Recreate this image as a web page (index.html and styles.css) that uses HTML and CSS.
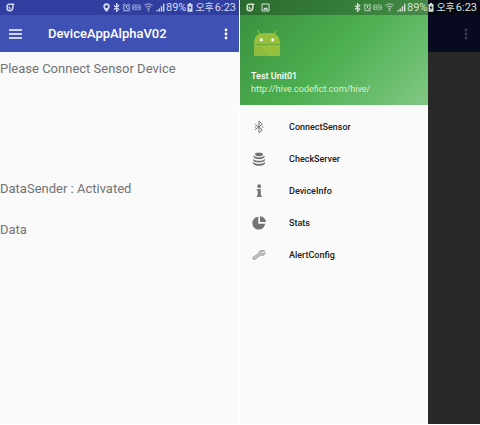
FILE: index.html
```html
<!DOCTYPE html>
<html lang="ko">
<head>
<meta charset="utf-8">
<title>DeviceAppAlphaV02</title>
<link rel="stylesheet" href="styles.css">
</head>
<body>
<svg class="sprite" aria-hidden="true">
  <symbol id="carrier" viewBox="0 0 9 9"><path d="M8.300 1.200H3.400Q1 1.200 1 4.400T3.700 7.800Q6.800 7.800 6.800 4.500V1.500M3.200 3.700Q3.200 5.600 4.600 5.400" fill="none" stroke="currentColor" stroke-width="1.500"/></symbol>
  <symbol id="pin" viewBox="0 0 9 9"><path d="M4.500 9Q1.300 5.500 1.300 3.400a3.200 3.200 0 0 1 6.400 0Q7.700 5.500 4.500 9ZM4.500 2a1.500 1.500 0 1 0 0 3 1.500 1.500 0 0 0 0-3Z" fill="currentColor" fill-rule="evenodd"/></symbol>
  <symbol id="bluetooth" viewBox="0 0 9 9"><path d="M2 2.500 6.800 6.300 4.500 8.300V.7l2.300 2L2 6.500" fill="none" stroke="currentColor" stroke-width="1.100"/></symbol>
  <symbol id="alarm" viewBox="0 0 9 9"><g fill="none" stroke="currentColor" stroke-width=".9"><circle cx="4.500" cy="4.900" r="3"/><path d="M.7 2.200 2.500.7M8.300 2.200 6.500.7M4.500 3v2l1.300.7M2.300 7.500l-.8 1M6.700 7.500l.8 1"/></g></symbol>
  <symbol id="vibrate" viewBox="0 0 9 9"><g fill="none" stroke="currentColor" stroke-width=".8"><path d="M.5 2v5M8.500 2v5M1.700 1.800h2v5h-2zM4.900 1.800h2.300v5H4.900zM1.700 4.300h2M5 4.300h2"/></g></symbol>
  <symbol id="wifi" viewBox="0 0 9 9"><path d="M.5 2.500Q4.500-.7 8.500 2.500M2 4.300Q4.500 2.400 7 4.300M3.300 5.900Q4.500 5 5.700 5.900" fill="none" stroke="currentColor" stroke-width="1.100"/><path d="M3.800 6.200h1.400v2.300H3.800z" fill="currentColor"/></symbol>
  <symbol id="signal" viewBox="0 0 9 9"><path d="M.5 7h1.400v1.500H.5zM2.600 5.500H4v3H2.600zM4.800 3.200h1.400v5.300H4.800zM7 .7h1.400v7.800H7z" fill="currentColor"/></symbol>
  <symbol id="battery" viewBox="0 0 6 9"><path d="M2 0h2v1h1.500v7.700H.5V1H2zM3.500 2 1.600 5h1.200L2.400 7.500 4.500 4.300H3.200z" fill="currentColor" fill-rule="evenodd"/></symbol>
  <symbol id="picture" viewBox="0 0 9 9"><path d="M1 1h7v7H1z" fill="none" stroke="currentColor"/><path d="m2 6.700 1.500-2.200 1 1L5.700 4 7 6.700z" fill="currentColor"/></symbol>
  <symbol id="more" viewBox="0 0 4 12"><g fill="currentColor"><circle cx="2" cy="2" r="1.400"/><circle cx="2" cy="6" r="1.400"/><circle cx="2" cy="10" r="1.400"/></g></symbol>
</svg>
<main class="screens">
  <section class="screen">
    <div class="status">
      <svg class="glyph"><use href="#carrier"/></svg>
      <div class="indicators">
        <svg class="glyph"><use href="#pin"/></svg><svg class="glyph"><use href="#bluetooth"/></svg><svg class="glyph"><use href="#alarm"/></svg><svg class="glyph dim"><use href="#vibrate"/></svg><svg class="glyph dim wide"><use href="#wifi"/></svg><svg class="glyph wide"><use href="#signal"/></svg>
        <span>89%</span><svg class="battery"><use href="#battery"/></svg><span class="meridiem">오후</span><span>6:23</span>
      </div>
    </div>
    <header class="appbar">
      <button class="icon-button" aria-label="Menu"><svg class="burger" viewBox="0 0 13 10"><path d="M0 1h13M0 5h13M0 9h13" stroke="currentColor" stroke-width="1.300"/></svg></button>
      <h1>DeviceAppAlphaV02</h1>
      <button class="icon-button" aria-label="More"><svg class="more"><use href="#more"/></svg></button>
    </header>
    <div class="content">
      <p class="message">Please Connect Sensor Device</p>
      <p class="sender">DataSender : Activated</p>
      <p>Data</p>
    </div>
  </section>
  <section class="screen shaded">
    <div class="status overlay">
      <svg class="glyph"><use href="#carrier"/></svg>
      <svg class="glyph notice"><use href="#picture"/></svg>
      <div class="indicators">
        <svg class="glyph"><use href="#bluetooth"/></svg><svg class="glyph"><use href="#alarm"/></svg><svg class="glyph dim"><use href="#vibrate"/></svg><svg class="glyph dim wide"><use href="#wifi"/></svg><svg class="glyph wide"><use href="#signal"/></svg>
        <span>89%</span><svg class="battery"><use href="#battery"/></svg><span class="meridiem">오후</span><span>6:23</span>
      </div>
    </div>
    <aside class="drawer">
      <div class="profile">
        <svg class="android" viewBox="0 0 28 28">
          <path d="M5 1.500 7.500 6M23 1.500 20.500 6" stroke="#a4c639" stroke-width="1" stroke-linecap="round"/>
          <path d="M1 15Q1 4 11 4h6q10 0 10 11z" fill="#97c13d"/>
          <path d="M1 15.500h26V27H1z" fill="#97c13d"/>
          <path d="M1 15.500h5L15 27H1z" fill="#8fba3c"/>
          <path d="M1 15.300h26" stroke="#6da535" stroke-width=".8"/>
          <circle cx="8.300" cy="10.700" r="1.500" fill="#fff"/><circle cx="19.700" cy="10.700" r="1.500" fill="#fff"/>
        </svg>
        <p class="name">Test Unit01</p>
        <p class="address">http://hive.codefict.com/hive/</p>
      </div>
      <nav class="menu">
        <a href="#connect"><svg viewBox="0 0 14 14"><path d="M3 4.200 10.300 9.800 7 12.800V1.200l3.300 3L3 9.800M2.800 7h1.400M9.800 7h1.600" fill="none" stroke="currentColor" stroke-width="1"/></svg>ConnectSensor</a>
        <a href="#server"><svg viewBox="0 0 14 14"><ellipse cx="7" cy="2.400" rx="4" ry="1.800" fill="currentColor"/><path d="M1.500 3.500Q3 5.600 7 5.600t5.500-2.100v1.700Q11 7.300 7 7.300T1.500 5.200zM1 6.700q1.500 2.100 6 2.100t6-2.100v1.600q-1.500 2.200-6 2.200T1 8.300zM1 9.800q1.500 2.100 6 2.100t6-2.100v1.600q-1.500 2.300-6 2.300t-6-2.300z" fill="currentColor"/></svg>CheckServer</a>
        <a href="#info"><svg viewBox="0 0 14 14"><circle cx="7.200" cy="2.200" r="1.900" fill="currentColor"/><path d="M4.800 5h4v6.500h.9V13H4.800v-1.500h.9v-5h-.9z" fill="currentColor"/></svg>DeviceInfo</a>
        <a href="#stats"><svg viewBox="0 0 14 14"><path d="M6.300.8v6.900h6.800A6.400 6.400 0 1 1 6.300.8ZM8 .2a6.200 6.200 0 0 1 5.900 5.900H8z" fill="currentColor"/></svg>Stats</a>
        <a href="#alert" class="light"><svg viewBox="0 0 14 14"><path d="m12.800 3.100-2.500.1-.9 1.400 1 1 3-.6q-.9 2.500-3.600 2.300-1.200-.2-1.900.2L3.300 11.100q-1.300.9-2.200 0t.2-2l5.100-3.400q.6-.5.5-1.500Q8.200 1.400 12.800 3.100Z" fill="#c4c4c4" stroke="currentColor" stroke-width="1"/></svg>AlertConfig</a>
      </nav>
    </aside>
    <div class="backdrop"><div class="shaded-bar"><svg class="more"><use href="#more"/></svg></div></div>
  </section>
</main>
</body>
</html>
```
FILE: styles.css
```css
* { box-sizing: border-box; }
body {
  margin: 0;
  background: #fff;
  font-family: Roboto, "Noto Sans CJK KR", sans-serif;
}
h1, p { margin: 0; }
.sprite { position: absolute; width: 0; height: 0; }
.screens {
  display: grid;
  grid-template-columns: 1fr 1fr;
  min-height: 100vh;
  padding-bottom: 1px;
}
.screen {
  position: relative;
  display: flex;
  flex-direction: column;
  background: #fafafa;
  border-right: 1px solid #fff;
}
.status {
  display: flex;
  align-items: center;
  height: 15px;
  padding: 0 3px 0 6px;
  background: #303f9f;
  color: #d3d8f2;
  font-size: 11px;
  line-height: 15px;
}
.glyph { width: 9px; height: 9px; }
.indicators {
  display: flex;
  align-items: center;
  gap: 1px;
  margin-left: auto;
  white-space: nowrap;
}
.wide { margin-left: 2px; }
.dim { opacity: .65; }
.battery { width: 6px; height: 9px; margin-right: 1px; }
.meridiem { font-size: 10px; }
.appbar {
  display: flex;
  align-items: center;
  height: 37px;
  padding: 0 11px 0 9px;
  background: #3f51b5;
  color: #fff;
}
.icon-button {
  display: flex;
  padding: 0;
  border: 0;
  background: none;
  color: inherit;
}
.burger { width: 13px; height: 10px; }
.more { width: 4px; height: 12px; }
.appbar h1 {
  flex: 1;
  padding-left: 26px;
  font-size: 13px;
  font-weight: 500;
}
.content {
  padding-top: 7px;
  color: #737373;
  font-size: 13px;
  line-height: 20px;
}
.message { min-height: 120px; }
.sender { min-height: 41px; }
.shaded {
  flex-direction: row;
  border: 0;
  background: #282828;
}
.overlay {
  position: absolute;
  inset: 0 0 auto;
  background: rgba(0, 0, 0, .25);
  color: #d6e5d8;
}
.notice { margin-left: 6px; }
.drawer {
  width: 78.3%;
  background: #fafafa;
}
.profile {
  height: 105px;
  padding: 29px 11px 0;
  background: linear-gradient(135deg, #388e3c, #4caf50 50%, #81c784);
  color: #fff;
  font-size: 9px;
  line-height: 13px;
}
.android { display: block; width: 28px; height: 28px; margin: 0 2px 13px; }
.name { font-weight: 500; }
.address { color: #d9f0da; }
.menu { padding-top: 6px; }
.menu a {
  display: flex;
  align-items: center;
  gap: 23px;
  height: 32px;
  padding-left: 12px;
  color: #212121;
  font-size: 9px;
  font-weight: 500;
  text-decoration: none;
}
.menu svg { width: 14px; height: 14px; color: #737373; }
.menu .light svg { color: #a0a0a0; }
.backdrop { flex: 1; }
.shaded-bar {
  display: flex;
  justify-content: flex-end;
  align-items: center;
  height: 52px;
  padding: 15px 12px 0 0;
  background: #080b20;
  color: #3b3d4c;
}
```
